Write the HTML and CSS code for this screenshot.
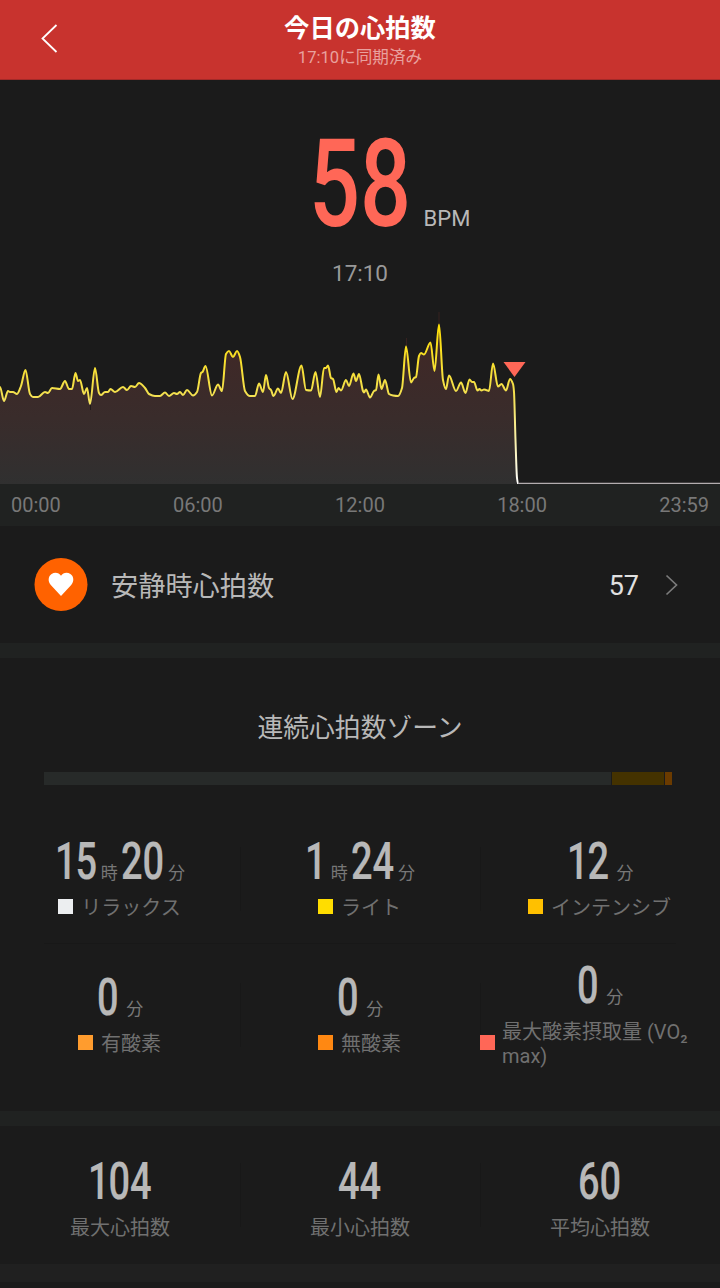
FILE: index.html
```
<!DOCTYPE html>
<html lang="ja">
<head>
    <meta charset="UTF-8">
    <meta name="viewport" content="width=device-width, initial-scale=1.0">
    <title>今日の心拍数</title>
    <link rel="stylesheet" href="styles.css">
</head>
<body>
    <header class="header">
        <svg class="back" width="18" height="30" viewBox="0 0 18 30">
            <path d="M15.500 2 L1.500 15.500 L15.500 29" fill="none" stroke="#fff" stroke-width="1.8"/>
        </svg>
        <div class="titles">
            <h1>今日の心拍数</h1>
            <p>17:10に同期済み</p>
        </div>
    </header>

    <section class="current">
        <div class="bpm">
            <span class="num d2">58</span>
            <span class="bpm-unit">BPM</span>
        </div>
        <div class="time">17:10</div>
    </section>

    <svg class="chart" width="720" height="184" viewBox="0 0 720 184">
        <defs>
            <linearGradient id="lineGrad" gradientUnits="userSpaceOnUse" x1="0" y1="20" x2="0" y2="184">
                <stop offset="0" stop-color="#ffdf00"/>
                <stop offset="0.45" stop-color="#f3e04f"/>
                <stop offset="1" stop-color="#ffffff"/>
            </linearGradient>
            <linearGradient id="areaGrad" gradientUnits="userSpaceOnUse" x1="0" y1="20" x2="0" y2="184">
                <stop offset="0" stop-color="#422725"/>
                <stop offset="0.6" stop-color="#392c2b"/>
                <stop offset="1" stop-color="#303030"/>
            </linearGradient>
        </defs>
        <path id="area" fill="url(#areaGrad)"/>
        <path d="M439 12 V24 M406.500 38 V46" stroke="#362221" stroke-width="1"/>
        <path d="M90.500 104 V110" stroke="#1f1a1a" stroke-width="1"/>
        <path d="M517 183.500 H720" stroke="#b3adaf" stroke-width="1.600"/>
        <path id="line" fill="none" stroke="url(#lineGrad)" stroke-width="2"/>
        <path d="M503.500 62 H525.500 L514.500 77 Z" fill="#ff6757"/>
    </svg>
    <div class="axis">
        <span>00:00</span>
        <span>06:00</span>
        <span>12:00</span>
        <span>18:00</span>
        <span>23:59</span>
    </div>

    <section class="resting">
        <svg width="54" height="54" viewBox="0 0 54 54">
            <circle cx="27" cy="26.500" r="26.500" fill="#ff6200"/>
            <path d="M27 38 L16.800 27 C13.600 23.500 14.200 18.100 17.600 16 C21 13.900 25 14.800 27 17.700 C29 14.800 33 13.900 36.400 16 C39.800 18.100 40.400 23.500 37.200 27 Z" fill="#fff"/>
        </svg>
        <span class="resting-label">安静時心拍数</span>
        <span class="resting-value">57</span>
        <svg width="14" height="22" viewBox="0 0 14 22">
            <path d="M1.500 1.500 L11.500 11 L1.500 20.500" fill="none" stroke="#7b7b7b" stroke-width="1.700"/>
        </svg>
    </section>
    <div class="divider"></div>

    <section class="zones">
        <h2>連続心拍数ゾーン</h2>
        <div class="bar">
            <div class="seg relax"></div>
            <div class="seg light"></div>
            <div class="seg intense"></div>
        </div>
        <div class="row row-top">
            <div class="cell">
                <div class="value"><span class="num d2 one">15</span><span class="unit">時</span><span class="num d2 next">20</span><span class="unit">分</span></div>
                <div class="label"><i class="swatch c-relax"></i>リラックス</div>
            </div>
            <div class="cell">
                <div class="value"><span class="num d1">1</span><span class="unit">時</span><span class="num d2 next">24</span><span class="unit">分</span></div>
                <div class="label"><i class="swatch c-light"></i>ライト</div>
            </div>
            <div class="cell">
                <div class="value"><span class="num d2 one">12</span><span class="unit wide">分</span></div>
                <div class="label"><i class="swatch c-intense"></i>インテンシブ</div>
            </div>
        </div>
        <div class="row row-bottom">
            <div class="cell">
                <div class="value"><span class="num d1">0</span><span class="unit wide">分</span></div>
                <div class="label"><i class="swatch c-aerobic"></i>有酸素</div>
            </div>
            <div class="cell">
                <div class="value"><span class="num d1">0</span><span class="unit wide">分</span></div>
                <div class="label"><i class="swatch c-anaerobic"></i>無酸素</div>
            </div>
            <div class="cell">
                <div class="value"><span class="num d1">0</span><span class="unit wide">分</span></div>
                <div class="label full"><i class="swatch c-vo2"></i><span>最大酸素摂取量 (VO₂<br>max)</span></div>
            </div>
        </div>
    </section>
    <div class="divider"></div>

    <section class="summary row">
        <div class="cell">
            <div class="value"><span class="num d3 one">104</span></div>
            <div class="label">最大心拍数</div>
        </div>
        <div class="cell">
            <div class="value"><span class="num d2">44</span></div>
            <div class="label">最小心拍数</div>
        </div>
        <div class="cell">
            <div class="value"><span class="num d2">60</span></div>
            <div class="label">平均心拍数</div>
        </div>
    </section>
    <div class="divider last"></div>

    <script src="script.js"></script>
</body>
</html>
```
FILE: styles.css
```
* {
    box-sizing: border-box;
}
body {
    margin: 0;
    height: 1288px;
    overflow: hidden;
    background: #1b1b1b;
    color: #b8b8b8;
    font-family: Roboto, "Noto Sans CJK JP", sans-serif;
}
h1, h2, p {
    margin: 0;
}
svg {
    display: block;
}
.header {
    display: grid;
    grid-template-columns: 80px 1fr 80px;
    height: 80px;
    background: #c8332e;
    border-bottom: 1px solid #a32a28;
    color: #fff;
}
.back {
    margin: 23px 0 0 41px;
}
.titles {
    text-align: center;
}
.titles h1 {
    margin-top: 13px;
    font-size: 25.3px;
    font-weight: 700;
    line-height: 31px;
}
.titles p {
    font-size: 16.6px;
    line-height: 27px;
    color: #e8a19e;
}
.current {
    height: 220px;
    padding-top: 54px;
}
.bpm {
    display: flex;
    align-items: baseline;
    padding-left: 309px;
    height: 100px;
    line-height: 100px;
}
.bpm .num {
    font-size: 123px;
    color: #ff6757;
}
.bpm-unit {
    margin-left: 12px;
    font-size: 22px;
}
.time {
    margin-top: 26px;
    font-size: 22.5px;
    line-height: 26px;
    text-align: center;
    color: #999;
}
/* condensed digits: scaled horizontally, the margin takes back the freed width */
.num {
    display: inline-block;
    font-weight: 500;
    transform: scaleX(0.73);
    transform-origin: 0 50%;
}
.num.d1 {
    margin-right: -0.152em;
}
.num.d2 {
    margin-right: -0.303em;
}
.num.d3 {
    margin-right: -0.455em;
}
/* a leading 1 sits closer to the next digit */
.num.one::first-letter {
    letter-spacing: -0.03em;
}
.axis {
    display: flex;
    justify-content: space-between;
    height: 42px;
    padding: 0 11px;
    background: #202221;
    font-size: 20px;
    line-height: 43px;
    color: #787878;
}
.resting {
    display: flex;
    align-items: center;
    height: 117px;
    padding: 0 41px 0 34px;
}
.resting-label {
    margin-left: 23px;
    padding-bottom: 2px;
    font-size: 27.2px;
}
.resting-value {
    margin: 2px 26px 0 auto;
    font-size: 27px;
    color: #e0e0e0;
}
.divider {
    height: 15px;
    background: #202221;
}
.divider.last {
    height: 18px;
    background: #202020;
}
.zones {
    height: 453px;
    padding-top: 51px;
}
.zones h2 {
    font-size: 25.8px;
    font-weight: 400;
    line-height: 38px;
    text-align: center;
}
.bar {
    display: flex;
    gap: 1px;
    width: 628px;
    height: 13px;
    margin: 25px 0 30px 44px;
}
.seg.relax {
    flex: 1;
    background: #272a29;
}
.seg.light {
    width: 52px;
    background: #443200;
}
.seg.intense {
    width: 7px;
    background: #6b3b00;
}
.row {
    display: grid;
    grid-template-columns: repeat(3, 240px);
}
.row-top {
    height: 128px;
}
.row-bottom {
    height: 143px;
    background: linear-gradient(#181818, #181818) 44px 0 / 632px 1px no-repeat;
}
.cell {
    display: flex;
    flex-direction: column;
    align-items: center;
    justify-content: center;
    padding-top: 1px;
}
.row-bottom .cell {
    padding-top: 3px;
}
.cell + .cell {
    background: linear-gradient(#181818, #181818) 0 50% / 1px 64px no-repeat;
}
.value {
    display: flex;
    align-items: baseline;
    height: 44px;
    margin-bottom: 10px;
    line-height: 44px;
}
.value .num {
    font-size: 52px;
    -webkit-text-stroke: 0.2px currentColor;
}
.unit {
    margin-left: 4px;
    font-size: 17px;
    color: #777;
}
.unit.wide {
    margin-left: 8px;
}
.next {
    margin-left: 3px;
}
.label {
    display: flex;
    align-items: center;
    font-size: 20px;
    line-height: 24px;
    padding-top: 2px;
    color: #707070;
}
.label.full {
    width: 240px;
}
.swatch {
    width: 15px;
    height: 15px;
    margin: -3px 8px 0 -1px;
}
.full .swatch {
    margin: -3px 7px 0 0;
}
.c-relax { background: #eceef0; }
.c-light { background: #ffdd00; }
.c-intense { background: #ffc000; }
.c-aerobic { background: #ff9c2e; }
.c-anaerobic { background: #ff8812; }
.c-vo2 { background: #ff6757; }
.summary {
    height: 138px;
}
.summary .cell {
    padding-top: 10px;
}
```
FILE: script.js
```
// heart rate curve, [x, y] in chart units
const points = [
    [0,87],[4,101],[8,91],[10,92],[13,92],[17,94],[21,86],[25.5,70],[30,94],[33,97],[38,97],[45,92],[48,93],[52,88],[60,89],
    [65,81],[69,89],[72,89],[75.5,73],[78,81],[80,80],[84,94],[87,88],[90,104],[95,68],[99,93],[101,95],[105,92],[108,92],
    [110.5,89],[115,92],[123,87],[127,90],[131,86],[135,87],[139,83],[145,88],[149,94],[155,96],[160,96],[165,92.5],[169,96],
    [174,93],[177,94],[180,92],[183,95],[187,90],[193,95.5],[197,92],[201,73],[202.5,72],[205.5,66],[212,95.5],[218,84.5],
    [222,91],[226,54],[229,51],[233,57],[237,51],[240,57],[245,91],[250,96],[255,96],[259,83.5],[263,92],[266,75],[269,88],
    [271,90],[273.5,96],[278,88.5],[281,93],[286,72],[292.5,99],[301.5,65.5],[306,90],[311,90.5],[315.5,72],[320,97],[324,68],
    [326,68],[328,65.5],[331,78],[333,79],[336.5,92],[338.5,88],[341,90.5],[346,80],[349,86],[353.5,73.5],[356,81],[359,74],
    [363,91],[364,92.5],[366,89.5],[370,97.5],[374,91],[376,90],[378.5,74.5],[381.5,89],[385,80],[389,94],[393,95.5],[398,96],
    [402,88],[406,46.5],[411,82.5],[414,78],[416,77],[419,56],[421,53],[424,54.5],[430.5,42.5],[434.5,71],[439,24.5],[443,80],
    [446,89],[449,75.5],[456,91],[461,82.5],[465.5,93],[469.5,79.5],[472,82],[474,82],[477.5,90.5],[479.5,89],[481.5,90.5],
    [484,89.5],[486,90],[489,91],[493,63.5],[498,86.5],[501.5,84],[506,90.5],[510,79],[513,84],[514,92],[515.5,140],[517,178],
    [518,183.5]
];

function slope(a, b) {
    return (b[1] - a[1]) / (b[0] - a[0]);
}

// flat at peaks and valleys, harmonic mean elsewhere
function tangent(i) {
    if (i === 0 || i === points.length - 1) return 0;
    const before = slope(points[i - 1], points[i]);
    const after = slope(points[i], points[i + 1]);
    if (before * after <= 0) return 0;
    return 2 * before * after / (before + after);
}

let d = `M${points[0][0]} ${points[0][1]}`;
for (let i = 0; i < points.length - 1; i++) {
    const [x0, y0] = points[i];
    const [x1, y1] = points[i + 1];
    const h = (x1 - x0) / 3;
    d += ` C${x0 + h} ${y0 + h * tangent(i)} ${x1 - h} ${y1 - h * tangent(i + 1)} ${x1} ${y1}`;
}

document.getElementById('line').setAttribute('d', d);
document.getElementById('area').setAttribute('d', d + ' V184 H0 Z');
```
